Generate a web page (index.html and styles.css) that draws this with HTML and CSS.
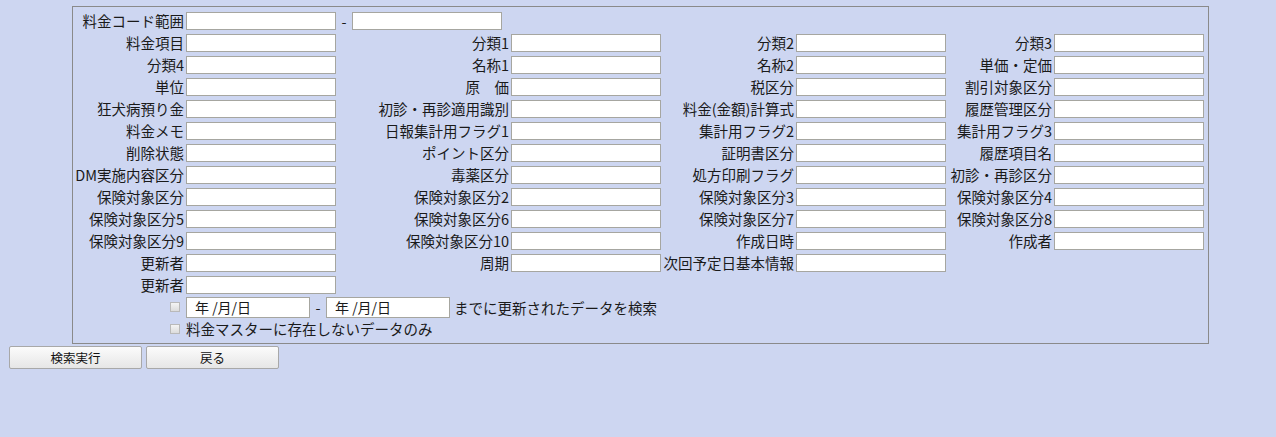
FILE: index.html
```html
<!DOCTYPE html>
<html lang="ja">

<head>
    <meta charset="UTF-8">
    <meta name="viewport" content="width=device-width, initial-scale=1.0">
    <title>料金マスター検索</title>
    <link rel="stylesheet" href="styles.css">
</head>

<body>
    <div class="search-box">
        <div class="range-row">
            <label class="lbl">料金コード範囲</label>
            <input type="text" class="txt">
            <span class="dash">-</span>
            <input type="text" class="txt">
        </div>
        <div class="form-grid">
            <label class="lbl">料金項目</label><input type="text" class="txt">
            <label class="lbl">分類1</label><input type="text" class="txt">
            <label class="lbl">分類2</label><input type="text" class="txt">
            <label class="lbl">分類3</label><input type="text" class="txt">

            <label class="lbl">分類4</label><input type="text" class="txt">
            <label class="lbl">名称1</label><input type="text" class="txt">
            <label class="lbl">名称2</label><input type="text" class="txt">
            <label class="lbl">単価・定価</label><input type="text" class="txt">

            <label class="lbl">単位</label><input type="text" class="txt">
            <label class="lbl">原　価</label><input type="text" class="txt">
            <label class="lbl">税区分</label><input type="text" class="txt">
            <label class="lbl">割引対象区分</label><input type="text" class="txt">

            <label class="lbl">狂犬病預り金</label><input type="text" class="txt">
            <label class="lbl">初診・再診適用識別</label><input type="text" class="txt">
            <label class="lbl">料金(金額)計算式</label><input type="text" class="txt">
            <label class="lbl">履歴管理区分</label><input type="text" class="txt">

            <label class="lbl">料金メモ</label><input type="text" class="txt">
            <label class="lbl">日報集計用フラグ1</label><input type="text" class="txt">
            <label class="lbl">集計用フラグ2</label><input type="text" class="txt">
            <label class="lbl">集計用フラグ3</label><input type="text" class="txt">

            <label class="lbl">削除状態</label><input type="text" class="txt">
            <label class="lbl">ポイント区分</label><input type="text" class="txt">
            <label class="lbl">証明書区分</label><input type="text" class="txt">
            <label class="lbl">履歴項目名</label><input type="text" class="txt">

            <label class="lbl">DM実施内容区分</label><input type="text" class="txt">
            <label class="lbl">毒薬区分</label><input type="text" class="txt">
            <label class="lbl">処方印刷フラグ</label><input type="text" class="txt">
            <label class="lbl">初診・再診区分</label><input type="text" class="txt">

            <label class="lbl">保険対象区分</label><input type="text" class="txt">
            <label class="lbl">保険対象区分2</label><input type="text" class="txt">
            <label class="lbl">保険対象区分3</label><input type="text" class="txt">
            <label class="lbl">保険対象区分4</label><input type="text" class="txt">

            <label class="lbl">保険対象区分5</label><input type="text" class="txt">
            <label class="lbl">保険対象区分6</label><input type="text" class="txt">
            <label class="lbl">保険対象区分7</label><input type="text" class="txt">
            <label class="lbl">保険対象区分8</label><input type="text" class="txt">

            <label class="lbl">保険対象区分9</label><input type="text" class="txt">
            <label class="lbl">保険対象区分10</label><input type="text" class="txt">
            <label class="lbl">作成日時</label><input type="text" class="txt">
            <label class="lbl">作成者</label><input type="text" class="txt">

            <label class="lbl">更新者</label><input type="text" class="txt">
            <label class="lbl">周期</label><input type="text" class="txt">
            <label class="lbl">次回予定日基本情報</label><input type="text" class="txt">
            <span></span><span></span>

            <label class="lbl">更新者</label><input type="text" class="txt">
            <span class="rest"></span>

            <span class="chk-cell"><input type="checkbox" class="chk" disabled></span>
            <div class="date-range">
                <span class="date-txt">年 /月/日</span>
                <span class="dash">-</span>
                <span class="date-txt">年 /月/日</span>
                <span class="note">までに更新されたデータを検索</span>
            </div>

            <span class="chk-cell"><input type="checkbox" class="chk" disabled></span>
            <div class="only-row">料金マスターに存在しないデータのみ</div>
        </div>
    </div>
    <div class="btn-row">
        <button class="btn">検索実行</button>
        <button class="btn">戻る</button>
    </div>
</body>

</html>
```

FILE: styles.css
```css
* {
    margin: 0;
    padding: 0;
    box-sizing: border-box;
}

body {
    width: 1276px;
    height: 437px;
    background-color: #cdd6f1;
    font-family: "Noto Sans CJK JP", "Noto Sans", sans-serif;
    font-size: 14.5px;
    color: #1a1a1a;
    overflow: hidden;
}

.search-box {
    width: 1137px;
    margin: 6px 0 0 72px;
    border: 1px solid #8a8a8a;
    padding: 5px 3px 5px 0;
}

.range-row {
    display: flex;
    align-items: center;
    height: 18px;
    margin-bottom: 4px;
}

.range-row .lbl {
    width: 113px;
}

.form-grid {
    display: grid;
    grid-template-columns: 113px 150px 175px 150px 135px 150px 108px 150px;
    grid-auto-rows: 18px;
    row-gap: 4px;
    align-items: center;
}

.lbl {
    text-align: right;
    padding-right: 2px;
    white-space: nowrap;
    line-height: 18px;
}

.txt {
    width: 150px;
    height: 18px;
    border: 1px solid #a6a6a0;
    background: #fff;
    outline: none;
}

.dash {
    width: 16px;
    text-align: center;
}

.rest {
    grid-column: 3 / 9;
}

.chk-cell {
    display: flex;
    justify-content: flex-end;
    padding-right: 6px;
}

.chk {
    width: 10px;
    height: 10px;
    appearance: none;
    border: 1px solid #b9b9b9;
    background: linear-gradient(#f4f4f4, #dcdcdc);
}

.date-range {
    grid-column: 2 / 9;
    display: flex;
    align-items: center;
    height: 21px;
}

.date-txt {
    width: 124px;
    height: 21px;
    line-height: 19px;
    padding-left: 8px;
    border: 1px solid #a6a6a0;
    background: #fff;
    font-size: 14px;
}

.date-range .dash {
    width: 16px;
}

.note {
    padding-left: 4px;
}

.only-row {
    grid-column: 2 / 9;
    line-height: 18px;
}

.btn-row {
    display: flex;
    gap: 4px;
    margin: 2px 0 0 9px;
}

.btn {
    width: 133px;
    height: 23px;
    border: 1px solid #a8a8a8;
    border-radius: 2px;
    background: linear-gradient(#fbfbfb, #e6e6e6);
    font-family: "Noto Sans CJK JP", sans-serif;
    font-size: 12.5px;
    color: #111;
}
```
